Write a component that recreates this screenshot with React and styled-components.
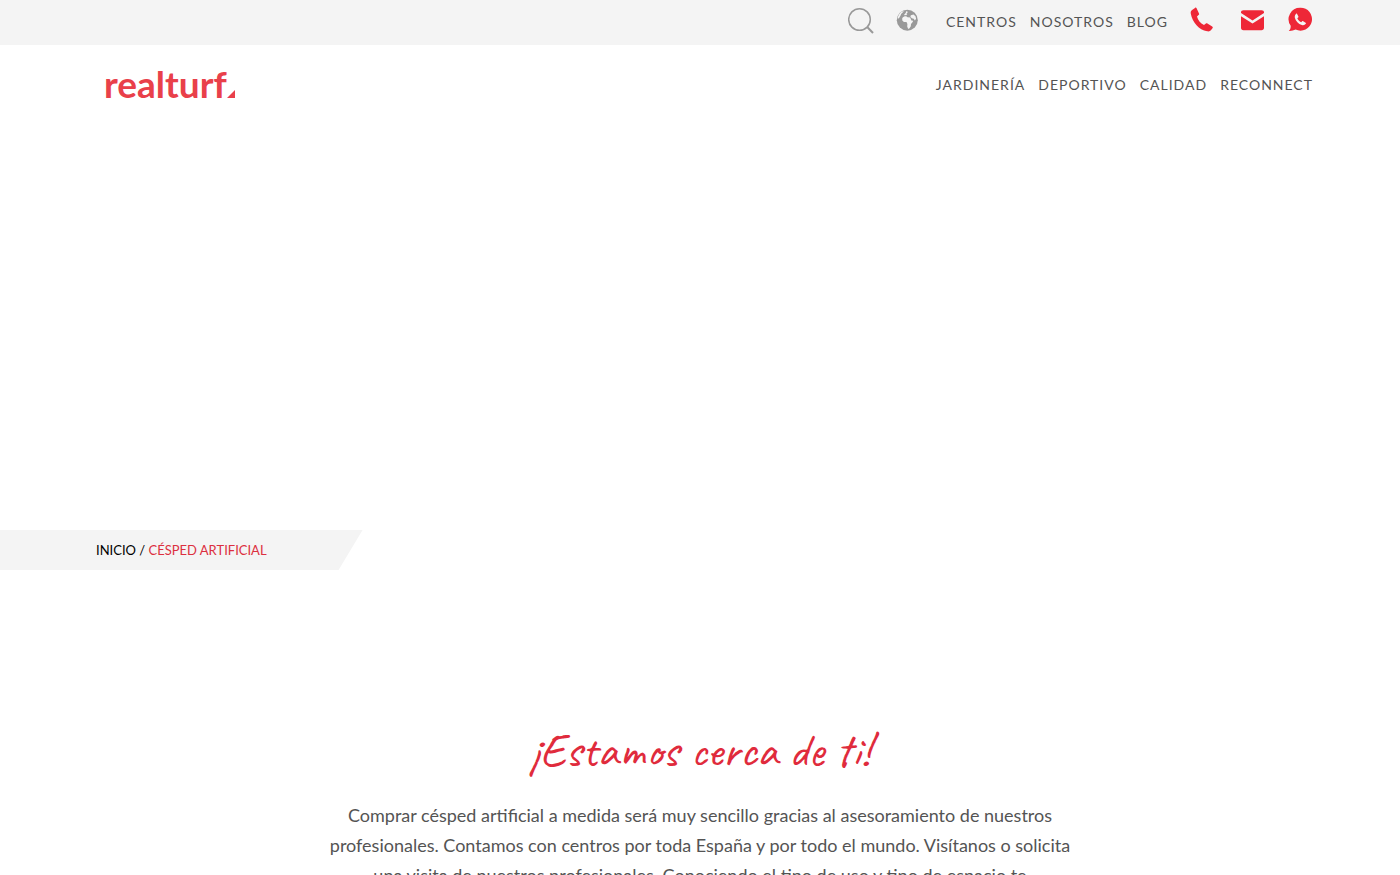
import styled, { createGlobalStyle } from "styled-components";

const GlobalStyle = createGlobalStyle`
  * {
    box-sizing: border-box;
  }

  body {
    margin: 0;
    background: #fff;
    color: #545454;
    font-family: "Proxima Nova", Lato, "Liberation Sans", sans-serif;
  }

  a {
    color: inherit;
    text-decoration: none;
  }
`;

const TopBar = styled.div`
  display: flex;
  align-items: flex-start;
  justify-content: flex-end;
  gap: 22px;
  height: 45px;
  padding: 7px 87px 0 96px;
  background: #f4f4f4;
`;

const IconButton = styled.button`
  display: flex;
  padding: 0;
  border: 0;
  background: none;
  color: #999;
  cursor: pointer;
`;

const Menu = styled.nav`
  display: flex;
  gap: 13px;
  font-size: 14px;
  line-height: 20px;
  letter-spacing: 1px;
  text-transform: uppercase;
`;

const TopMenu = styled(Menu)`
  margin-left: 6px;
  padding-top: 5px;
`;

const Contact = styled.div`
  display: flex;
  gap: 24px;
  color: #ee2737;

  a {
    display: flex;
  }
`;

const Header = styled.header`
  display: flex;
  align-items: center;
  justify-content: space-between;
  height: 80px;
  padding: 0 87px 0 104px;
`;

const Logo = styled.a`
  display: flex;
  align-items: baseline;
  && {
    color: #e9404a;
  }
  font-family: Lato, "Liberation Sans", sans-serif;
  font-size: 37px;
  font-weight: 700;
  line-height: 40px;
  padding-bottom: 2px;
`;

const Hero = styled.section`
  min-height: 405px;
`;

const Breadcrumb = styled.nav`
  width: fit-content;
  padding: 0 96px;
  background: #f4f4f4;
  color: #000;
  clip-path: polygon(0 0, 100% 0, calc(100% - 24px) 100%, 0 100%);
  font-size: 13px;
  line-height: 40px;
  text-transform: uppercase;
`;

const Current = styled.span`
  color: #dc2f40;
`;

const Intro = styled.section`
  max-width: 770px;
  margin: 0 auto;
  padding-top: 150px;
  text-align: center;
`;

const Title = styled.h1`
  margin: 0 0 20px;
  color: #e02b3c;
  font-family: Caveat, "Caveat Brush", cursive;
  font-size: 48px;
  font-weight: 500;
  line-height: 60px;
`;

const Text = styled.p`
  margin: 0;
  font-size: 18px;
  line-height: 30px;
`;

const topLinks = ["Centros", "Nosotros", "Blog"];
const mainLinks = ["Jardinería", "Deportivo", "Calidad", "Reconnect"];

const SearchIcon = () => (
  <svg width="26" height="27" viewBox="0 0 26 27" fill="none" stroke="#999">
    <circle cx="11.500" cy="12.500" r="10.800" strokeWidth="1.500" />
    <path d="M19.200 20 25 26" strokeWidth="2" />
  </svg>
);

const GlobeIcon = () => (
  <svg width="22" height="24" viewBox="0 0 22 24">
    <circle cx="11.300" cy="13.200" r="10.500" fill="#999" />
    <g fill="#f4f4f4">
      <path d="M6.200 11.200c1-1.500 2.300-2.100 4-2l1.300 1 2.700.2 1.200 3 1.700.3c-.2 1.500-1.200 2.300-2.100 3.300l-.2 2.200-1.300 2.100-1.300.7-1-2.400.2-2.600-.9-1.900-2.600-.1-1.600-1.500z" />
      <path d="M8.200 7.500 9.700 6l.5-1.800 1.300.4v1.200l-1.200 1.300 1.100.8-3 .4zM14.800 8.300l2.700-.7 2 1.700.6 2.500-1.200 1.600-1.200-1.700-1.900-.5-1.400-1.400z" />
      <path d="M4.800 5.300 8 3.800 6.700 5.500 5.300 6.800 4.300 9 2.800 11.500 1.700 11.200C2 9 3.200 6.900 4.800 5.300z" />
    </g>
  </svg>
);

const PhoneIcon = () => (
  <svg width="26" height="26" viewBox="0 0 26 26" fill="currentColor">
    <path d="M5 .9c.6-.5 1.200-.3 1.600.4l2.400 5.100c.3.700.1 1.200-.5 1.600L7 9.500c.8 3.600 3.400 6.800 7 8.600l1.900-1.500c.5-.4 1-.4 1.500-.1l4.800 3c.7.500.8 1 .3 1.700l-1.400 1.900c-.9 1.200-2.300 1.600-4 1.200C9 22.900 2.500 15.700.8 6.800.5 5.100.9 3.900 2.100 3z" />
  </svg>
);

const MailIcon = () => (
  <svg width="24" height="26" viewBox="0 0 24 26" fill="currentColor">
    <path d="M3.500 3.300h18c1.600 0 2.500.9 2.500 2v.8L12.500 13.500 1 6.100v-.8c0-1.100.9-2 2.500-2z" />
    <path d="M1 9.300l11.500 7.200L24 9.300v11.400c0 1.600-.9 2.500-2.500 2.500h-18C1.900 23.200 1 22.300 1 20.700z" />
  </svg>
);

const WhatsappIcon = () => (
  <svg width="25" height="26" viewBox="0 0 25 26">
    <path
      fill="currentColor"
      d="M12.600.7a11.500 11.500 0 1 1-5 21.900C5.500 23.600 3 24.200.8 24c1.400-1.200 2-2.700 1.900-5.200A11.500 11.500 0 0 1 12.600.7z"
    />
    <path
      fill="#f4f4f4"
      d="M8.100 6.800c.4-.4.8-.3 1 .2l1.300 2.500c.2.500.1.800-.3 1.100l-.8.700c.7 1.800 2 3.100 3.900 3.900l1-.9c.3-.3.700-.3 1-.1l2.400 1.500c.5.300.5.700.2 1.100-1 1.300-2.300 1.700-4 1.200-3.500-1.100-6-3.700-6.900-7-.4-1.700 0-3.100 1.200-4.200z"
    />
  </svg>
);

const App = () => {
  return (
    <>
      <GlobalStyle />

      <TopBar>
        <IconButton aria-label="Buscar">
          <SearchIcon />
        </IconButton>
        <IconButton aria-label="Idioma">
          <GlobeIcon />
        </IconButton>
        <TopMenu>
          {topLinks.map((link) => (
            <a key={link} href="#">
              {link}
            </a>
          ))}
        </TopMenu>
        <Contact>
          <a href="#" aria-label="Teléfono">
            <PhoneIcon />
          </a>
          <a href="#" aria-label="Correo">
            <MailIcon />
          </a>
          <a href="#" aria-label="WhatsApp">
            <WhatsappIcon />
          </a>
        </Contact>
      </TopBar>

      <Header>
        <Logo href="#">
          realturf
          <svg width="8" height="8" viewBox="0 0 8 8" fill="currentColor">
            <path d="M8 0v8H0z" />
          </svg>
        </Logo>
        <Menu>
          {mainLinks.map((link) => (
            <a key={link} href="#">
              {link}
            </a>
          ))}
        </Menu>
      </Header>

      <main>
        <Hero />
        <Breadcrumb>
          <a href="#">Inicio</a> / <Current>Césped artificial</Current>
        </Breadcrumb>

        <Intro>
          <Title>¡Estamos cerca de ti!</Title>
          <Text>
            Comprar césped artificial a medida será muy sencillo gracias al
            asesoramiento de nuestros profesionales. Contamos con centros por
            toda España y por todo el mundo. Visítanos o solicita una visita de
            nuestros profesionales. Conociendo el tipo de uso y tipo de espacio
            te
          </Text>
        </Intro>
      </main>
    </>
  );
};

export default App;
